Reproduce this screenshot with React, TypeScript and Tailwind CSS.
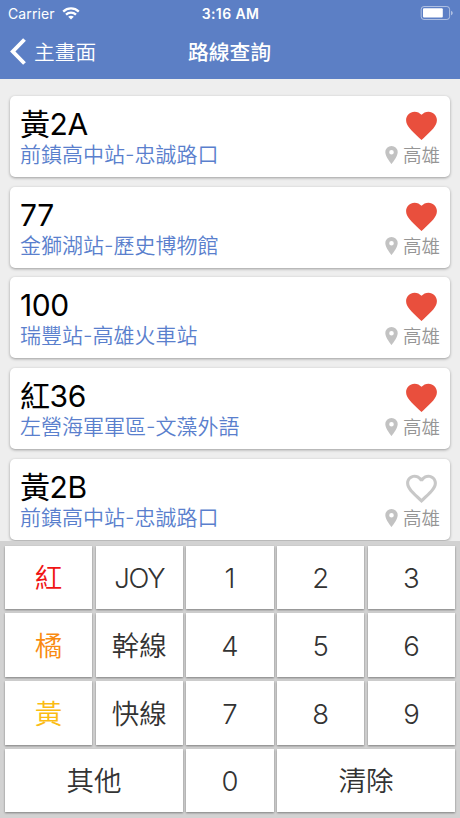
type Route = { name: string; path: string; liked: boolean };

const routes: Route[] = [
  { name: '黃2A', path: '前鎮高中站-忠誠路口', liked: true },
  { name: '77', path: '金獅湖站-歷史博物館', liked: true },
  { name: '100', path: '瑞豐站-高雄火車站', liked: true },
  { name: '紅36', path: '左營海軍軍區-文藻外語', liked: true },
  { name: '黃2B', path: '前鎮高中站-忠誠路口', liked: false },
];

const keys = [
  { label: '紅', style: 'font-[350] text-[#f01414]' },
  { label: 'JOY', style: 'font-light text-[#333333] tracking-[-1.2px]' },
  { label: '1', style: 'font-light text-[#333333]' },
  { label: '2', style: 'font-light text-[#333333]' },
  { label: '3', style: 'font-light text-[#333333]' },
  { label: '橘', style: 'font-[350] text-[#f98a10]' },
  { label: '幹線', style: 'font-[350] text-[#333333]' },
  { label: '4', style: 'font-light text-[#333333]' },
  { label: '5', style: 'font-light text-[#333333]' },
  { label: '6', style: 'font-light text-[#333333]' },
  { label: '黃', style: 'font-[350] text-[#fbbc12]' },
  { label: '快線', style: 'font-[350] text-[#333333]' },
  { label: '7', style: 'font-light text-[#333333]' },
  { label: '8', style: 'font-light text-[#333333]' },
  { label: '9', style: 'font-light text-[#333333]' },
  { label: '其他', style: 'col-span-2 font-[350] text-[#333333]' },
  { label: '0', style: 'font-light text-[#333333]' },
  { label: '清除', style: 'col-span-2 font-[350] text-[#333333]' },
];

function Wifi() {
  return (
    <svg className="ml-[7px] h-[13px] w-[18px]" viewBox="0 0 18 13" fill="none" stroke="white" strokeWidth="2.3">
      <path d="M1.2 4.6C5.6.4 12.4.4 16.8 4.6" />
      <path d="M4 7.6c2.8-2.7 7.2-2.7 10 0" />
      <path d="M9 12.6 6.2 9.8c1.6-1.5 4-1.5 5.6 0Z" fill="white" stroke="none" />
    </svg>
  );
}

function Battery() {
  return (
    <svg className="h-[14px] w-[33px]" viewBox="0 0 33 14" fill="none">
      <rect x="1.2" y="0.5" width="28.4" height="13" rx="2.8" stroke="white" strokeOpacity=".5" />
      <rect x="3" y="2.3" width="19.8" height="9.3" rx="1" fill="white" />
      <path d="M31 4.7c2.3.8 2.3 3.8 0 4.6Z" fill="white" fillOpacity=".5" />
    </svg>
  );
}

function Heart({ liked }: { liked: boolean }) {
  return (
    <svg className="h-[37px] w-[37px]" viewBox="0 0 24 24" fill={liked ? '#e94f3d' : '#c8c8c8'}>
      {liked ? (
        <path d="M12 21.35l-1.45-1.32C5.4 15.36 2 12.28 2 8.5 2 5.42 4.42 3 7.5 3c1.74 0 3.41.81 4.5 2.09C13.09 3.81 14.76 3 16.5 3 19.58 3 22 5.42 22 8.5c0 3.78-3.4 6.86-8.55 11.54L12 21.35z" />
      ) : (
        <path d="M16.5 3c-1.74 0-3.41.81-4.5 2.09C10.91 3.81 9.24 3 7.5 3 4.42 3 2 5.42 2 8.5c0 3.78 3.4 6.86 8.55 11.54L12 21.35l1.45-1.32C18.6 15.36 22 12.28 22 8.5 22 5.42 19.58 3 16.5 3zm-4.4 15.55l-.1.1-.1-.1C7.14 14.24 4 11.39 4 8.5 4 6.5 5.5 5 7.5 5c1.54 0 3.04.99 3.57 2.36h1.87C13.46 5.99 14.96 5 16.5 5c2 0 3.5 1.5 3.5 3.5 0 2.89-3.14 5.74-7.9 10.05z" />
      )}
    </svg>
  );
}

function Pin() {
  return (
    <svg className="h-[18px] w-[13px]" viewBox="0 0 13 18">
      <path
        fillRule="evenodd"
        fill="#c2c2c2"
        d="M6.5 0A6.2 6.2 0 0 0 .3 6.2C.3 10.8 6.5 18 6.5 18s6.2-7.2 6.2-11.8A6.2 6.2 0 0 0 6.5 0Zm0 3.9a2.3 2.3 0 1 1 0 4.6 2.3 2.3 0 0 1 0-4.6Z"
      />
    </svg>
  );
}

function RouteCard({ route }: { route: Route }) {
  return (
    <li className="flex h-[81px] shrink-0 justify-between rounded-[5px] bg-white px-[10px] shadow-[0_1px_3px_rgba(0,0,0,0.35)]">
      <div className="flex flex-col pt-[10px]">
        <h2 className="h-[36px] text-[30px] leading-[36px] font-[370] tracking-[-0.4px] text-black">{route.name}</h2>
        <p className="h-[26px] text-[21px] leading-[26px] font-[350] text-[#5a7fcd]">{route.path}</p>
      </div>
      <div className="flex flex-col items-end pt-[11px]">
        <div className="h-[36px]">
          <Heart liked={route.liked} />
        </div>
        <div className="flex h-[24px] items-center gap-[5px] text-[18.5px] leading-[24px] font-[350] text-[#959595]">
          <Pin />
          <span>高雄</span>
        </div>
      </div>
    </li>
  );
}

export default function App() {
  return (
    <div className="flex h-[818px] w-[460px] flex-col overflow-hidden bg-[#eeeeee] font-[Inter,'Noto_Sans_CJK_TC',sans-serif]">
      <header className="h-[79px] shrink-0 bg-[#5c7fc5] text-white">
        <div className="grid h-[26px] grid-cols-3 items-center pr-[7px] pl-[8px] text-[14px]">
          <div className="flex items-center">
            <span className="tracking-[0.1px]">Carrier</span>
            <Wifi />
          </div>
          <span className="text-center font-semibold tracking-[0.4px]">3:16 AM</span>
          <div className="flex justify-end">
            <Battery />
          </div>
        </div>
        <div className="grid h-[52px] grid-cols-3 items-center pr-[11px] pl-[10px]">
          <button className="flex items-center gap-[8px] text-[20.7px] font-[350]">
            <svg className="h-[27px] w-[16px]" viewBox="0 0 16 27" fill="none" stroke="white" strokeWidth="3.9">
              <path d="M14.5 1.5 2.8 13.5l11.7 12" />
            </svg>
            <span className="pt-px">主畫面</span>
          </button>
          <h1 className="pt-px text-center text-[20.8px] font-medium">路線查詢</h1>
        </div>
      </header>
      <ul className="flex h-[462px] shrink-0 flex-col gap-[9.7px] overflow-hidden px-[10px] pt-[17px]">
        {routes.map((route) => (
          <RouteCard key={route.name} route={route} />
        ))}
      </ul>
      <section className="grid flex-1 grid-cols-5 grid-rows-[repeat(4,63.7px)] gap-x-[3.6px] gap-y-[4px] bg-[#d2d2d2] px-[5px] pt-[4.7px]">
        {keys.map((key) => (
          <button
            key={key.label}
            className={`flex items-center justify-center bg-white pt-[3px] text-[27.5px] shadow-[0_1px_2px_rgba(0,0,0,0.4)] ${key.style}`}
          >
            {key.label}
          </button>
        ))}
      </section>
    </div>
  );
}
